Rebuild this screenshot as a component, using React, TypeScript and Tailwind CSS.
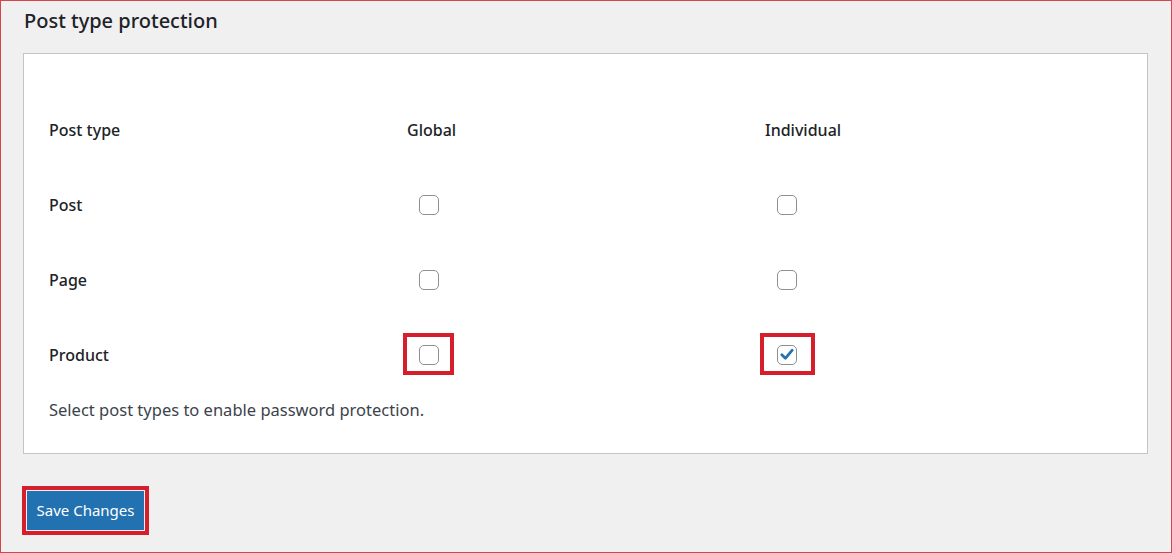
import React from "react";

const Box = ({ checked }: { checked?: boolean }) => (
  <span className="ml-[12px] flex h-[20px] w-[20px] items-center justify-center rounded-[5px] border border-[#8c8f94] bg-white">
    {checked && (
      <svg viewBox="0 0 20 20" className="h-[19px] w-[19px]">
        <path d="M4.2 10.3 L8.2 14.2 L15.8 5.2" fill="none" stroke="#2271b1" strokeWidth="3" strokeLinecap="round" strokeLinejoin="round" />
      </svg>
    )}
  </span>
);

export default function App() {
  const rows = [
    { name: "Post", g: false, i: false, hl: false },
    { name: "Page", g: false, i: false, hl: false },
    { name: "Product", g: false, i: true, hl: true },
  ];
  return (
    <div
      className="h-[553px] w-[1172px] overflow-hidden border border-[#d9434b] bg-[#f0f0f1] text-[#1d2327]"
      style={{ fontFamily: '"Noto Sans", "Open Sans", sans-serif' }}
    >
      <h2 className="ml-[23px] mt-[6px] text-[20px] font-medium leading-[28px]">Post type protection</h2>
      <div className="ml-[22px] mt-[18px] h-[401px] w-[1125px] border border-[#c3c4c7] bg-white pl-[25px] pt-[38px]">
        <div className="grid h-[75px] grid-cols-[358px_358px_1fr] items-center text-[16px] font-medium">
          <div>Post type</div>
          <div>Global</div>
          <div>Individual</div>
        </div>
        {rows.map((r) => (
          <div key={r.name} className="grid h-[75px] grid-cols-[358px_358px_1fr] items-center text-[16px]">
            <div className="font-medium">{r.name}</div>
            <div className="relative flex items-center">
              <Box checked={r.g} />
              {r.hl && <span className="absolute left-[-4px] top-[-12px] h-[42px] w-[51px] border-[4px] border-[#d61f2c]" />}
            </div>
            <div className="relative flex items-center">
              <Box checked={r.i} />
              {r.hl && <span className="absolute left-[-5px] top-[-12px] h-[42px] w-[55px] border-[4px] border-[#d61f2c]" />}
            </div>
          </div>
        ))}
        <p className="mt-[6px] text-[16.5px] leading-[24px] text-[#3c434a]">Select post types to enable password protection.</p>
      </div>
      <div className="ml-[21px] mt-[32px] inline-block border-[4px] border-[#d61f2c] p-[1px]">
        <button className="flex h-[39px] w-[117px] items-center justify-center bg-[#2271b1] text-[15px] text-white">
          Save Changes
        </button>
      </div>
    </div>
  );
}
